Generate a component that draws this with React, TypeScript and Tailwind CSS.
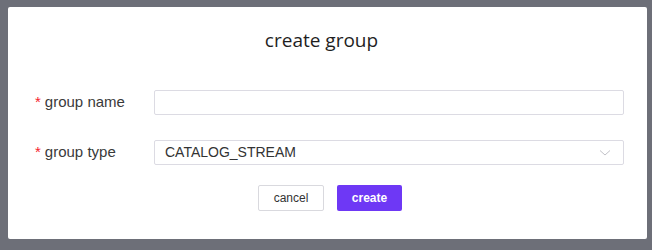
export default function App() {
    return (
        <div className="h-[250px] w-[652px] bg-[#6d6f78] pl-[8px] pt-[7px] font-['Liberation_Sans',Arial,sans-serif]">
            <div className="flex h-[232px] w-[639px] flex-col rounded-[2px] bg-white">
                <h1 className="mt-[21px] h-[24px] pr-[12px] text-center font-['Open_Sans',sans-serif] text-[19px] leading-[24px] font-normal text-[#1f1f1f]">
                    create group
                </h1>
                <div className="mt-[38px] flex flex-col gap-y-[25px] pl-[27px]">
                    <div className="flex h-[25px] items-center">
                        <label className="w-[119px] text-[15px] text-[#3a3a3a]">
                            <span className="mr-[4px] text-[#f5222d]">*</span>group name
                        </label>
                        <input
                            type="text"
                            className="h-[25px] w-[470px] rounded-[2px] border border-[#dcdbe3] bg-white px-[10px] text-[14px] outline-none"
                        />
                    </div>
                    <div className="flex h-[25px] items-center">
                        <label className="w-[119px] text-[15px] text-[#3a3a3a]">
                            <span className="mr-[4px] text-[#f5222d]">*</span>group type
                        </label>
                        <div className="flex h-[25px] w-[470px] items-center justify-between rounded-[2px] border border-[#dcdbe3] bg-white pl-[10px] pr-[12px] text-[14px] text-[#333]">
                            <span>CATALOG_STREAM</span>
                            <svg width="12" height="8" viewBox="0 0 12 8" fill="none">
                                <path d="M1 1.5 L6 6 L11 1.5" stroke="#c2c2c8" strokeWidth="1" />
                            </svg>
                        </div>
                    </div>
                </div>
                <div className="mt-[20px] flex justify-center gap-x-[13px] pl-[5px]">
                    <button
                        type="button"
                        className="h-[26px] w-[66px] rounded-[2px] border border-[#d9d9de] bg-white text-[12px] text-[#333]"
                    >
                        cancel
                    </button>
                    <button
                        type="button"
                        className="h-[26px] w-[65px] rounded-[2px] bg-[#6e38f5] text-[12px] font-bold text-white"
                    >
                        create
                    </button>
                </div>
            </div>
        </div>
    );
}
